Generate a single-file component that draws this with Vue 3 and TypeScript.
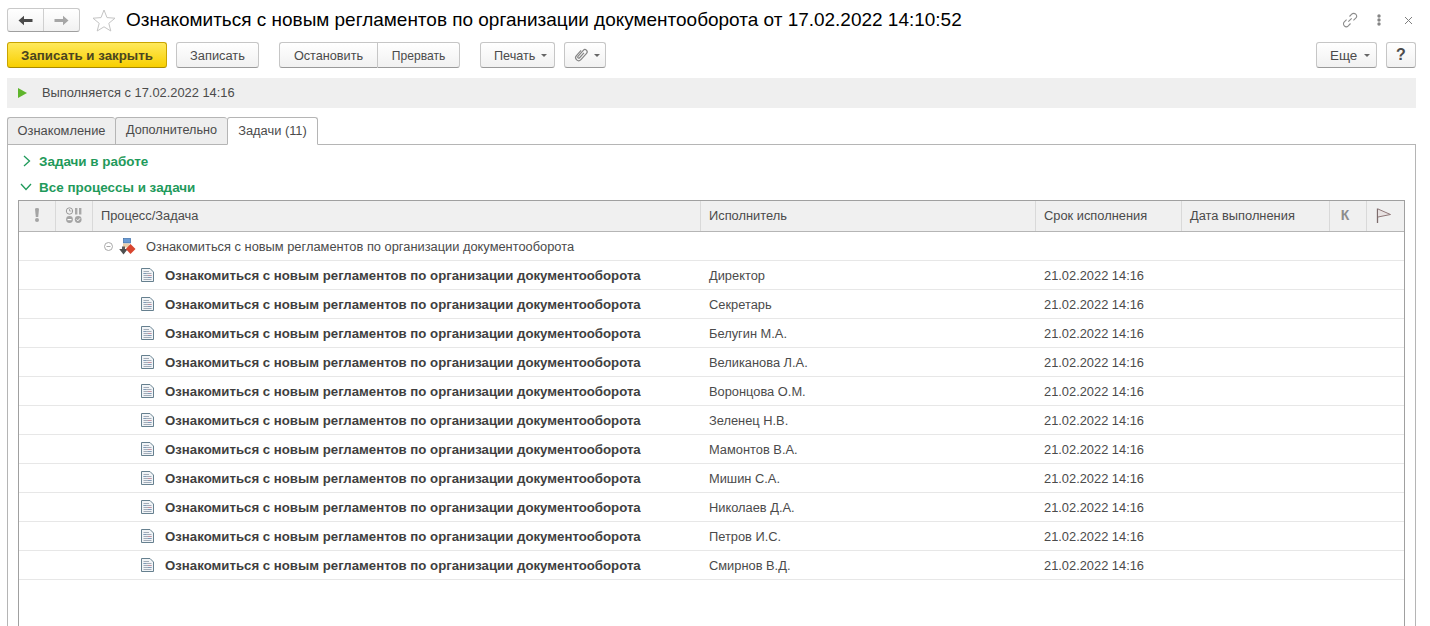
<script setup lang="ts">
interface Row { who: string }
const rows: Row[] = [
  'Директор', 'Секретарь', 'Белугин М.А.', 'Великанова Л.А.', 'Воронцова О.М.', 'Зеленец Н.В.',
  'Мамонтов В.А.', 'Мишин С.А.', 'Николаев Д.А.', 'Петров И.С.', 'Смирнов В.Д.',
].map((who) => ({ who }))
const taskName = 'Ознакомиться с новым регламентов по организации документооборота'
</script>

<template>
  <div class="page">
    <header class="titlebar">
      <div class="nav">
        <button class="nav-btn">
          <svg width="15" height="11" viewBox="0 0 15 11"><path d="M0.5 5.5 6 0.8V4H14.5V7H6V10.2Z" fill="#4a4a4a" /></svg>
        </button>
        <button class="nav-btn">
          <svg width="15" height="11" viewBox="0 0 15 11"><path d="M14.5 5.5 9 0.8V4H0.5V7H9V10.2Z" fill="#a6a6a6" /></svg>
        </button>
      </div>
      <svg class="star" width="24" height="23" viewBox="0 0 24 23"><path d="M12 1 15 8.6 23 9.2 16.8 14.3 18.8 22 12 17.8 5.2 22 7.2 14.3 1 9.2 9 8.6Z" fill="#fff" stroke="#c4c4c4" /></svg>
      <h1 class="title">Ознакомиться с новым регламентов по организации документооборота от 17.02.2022 14:10:52</h1>
      <div class="win-icons">
        <svg width="16" height="16" viewBox="0 0 16 16" fill="none" stroke="#8c8c8c" stroke-width="1.1"><path d="M6.3 9.7 9.7 6.3M7.5 4.5 9.7 2.2a2.5 2.5 0 0 1 4 4L11.4 8.4M8.5 11.5 6.3 13.8a2.5 2.5 0 0 1-4-4L4.6 7.6" /></svg>
        <svg class="dots" width="4" height="12" viewBox="0 0 4 12" fill="#858585"><circle cx="2" cy="2" r="1.7" /><circle cx="2" cy="6" r="1.7" /><circle cx="2" cy="10" r="1.7" /></svg>
        <svg class="close" width="9" height="9" viewBox="0 0 9 9" stroke="#7f7f7f" stroke-width="1"><path d="M1 1 8 8M8 1 1 8" /></svg>
      </div>
    </header>

    <div class="toolbar">
      <button class="btn primary">Записать и закрыть</button>
      <button class="btn w-save">Записать</button>
      <div class="btn-group">
        <button class="btn w-stop">Остановить</button>
        <button class="btn w-abort">Прервать</button>
      </div>
      <button class="btn w-print">Печать<span class="caret" /></button>
      <button class="btn w-clip">
        <svg width="16" height="16" viewBox="0 0 16 16" fill="none" stroke="#858585" stroke-width="1.2"><g transform="rotate(42 8 8)"><path d="M5 4.5V11.5a3 3 0 0 0 6 0V3a2.2 2.2 0 0 0-4.4 0V11a1.1 1.1 0 0 0 2.2 0V4.5" /></g></svg>
        <span class="caret" />
      </button>
      <div class="spacer" />
      <button class="btn w-more">Еще<span class="caret" /></button>
      <button class="btn w-help">?</button>
    </div>

    <div class="status">
      <svg width="9" height="10" viewBox="0 0 9 10"><path d="M0 0 9 5 0 10Z" fill="#5fb52c" /></svg>
      <span>Выполняется с 17.02.2022 14:16</span>
    </div>

    <nav class="tabs">
      <div class="tab t1">Ознакомление</div>
      <div class="tab t2">Дополнительно</div>
      <div class="tab t3 active">Задачи (11)</div>
    </nav>

    <section class="panel">
      <div class="group g1">
        <svg width="10" height="12" viewBox="0 0 10 12" fill="none" stroke="#1f9a5b" stroke-width="1.3"><path d="M2 1 7.5 6 2 11" /></svg>
        <span>Задачи в работе</span>
      </div>
      <div class="group g2">
        <svg width="12" height="10" viewBox="0 0 12 10" fill="none" stroke="#1f9a5b" stroke-width="1.3"><path d="M1 2 6 7.5 11 2" /></svg>
        <span>Все процессы и задачи</span>
      </div>

      <div class="table">
        <div class="head">
          <div class="hc center">
            <svg width="6" height="14" viewBox="0 0 6 14" fill="#a4a4a4"><path d="M1 1a2 1 0 0 1 4 0L4.2 9H1.8Z" /><circle cx="3" cy="12" r="2" /></svg>
          </div>
          <div class="hc center">
            <svg width="18" height="17" viewBox="0 0 18 17">
              <circle cx="4.5" cy="4" r="3.2" fill="none" stroke="#9a9a9a" />
              <path d="M4.5 2V4H6.5" fill="none" stroke="#9a9a9a" stroke-width=".8" />
              <rect x="10" y="1" width="2.4" height="6.5" fill="#a8a8a8" />
              <rect x="14" y="1" width="2.4" height="6.5" fill="#a8a8a8" />
              <circle cx="4.5" cy="12.5" r="3.4" fill="#a4a4a4" />
              <rect x="2.5" y="12" width="4" height="1.2" fill="#fff" />
              <circle cx="13.2" cy="12.5" r="3.4" fill="#a4a4a4" />
              <path d="M11.6 12.5 12.9 13.8 15 11.3" fill="none" stroke="#fff" />
            </svg>
          </div>
          <div class="hc">Процесс/Задача</div>
          <div class="hc">Исполнитель</div>
          <div class="hc">Срок исполнения</div>
          <div class="hc">Дата выполнения</div>
          <div class="hc center k">К</div>
          <div class="hc center last">
            <svg class="flag" width="16" height="15" viewBox="0 0 16 15" fill="none"><path d="M1.5 0.5V15" stroke="#7d6c6c" stroke-width="1.3" /><path d="M2 1 14.5 6.5 2 9" stroke="#8f7878" fill="#e8e2e2" /></svg>
          </div>
        </div>

        <div class="row process">
          <div class="cell name-cell">
            <svg class="minus" width="9" height="9" viewBox="0 0 9 9" fill="none" stroke="#a8a8a8"><circle cx="4.5" cy="4.5" r="4" /><path d="M2.5 4.5H6.5" /></svg>
            <svg class="proc-icon" width="17" height="17" viewBox="0 0 17 17">
              <rect x="4.5" y="0.5" width="7" height="4.5" fill="#6a9bd4" stroke="#3d6ea8" stroke-width=".7" />
              <path d="M4 5.5H10.5V9.5H4Z" fill="#ecd0ac" />
              <path d="M3 8.5H6V12.5H3Z" fill="#5a5a5a" />
              <path d="M0.2 11 4.5 16.5 8.8 11Z" fill="#4f4f4f" />
              <path d="M11.5 6 16.5 11 11.5 16 6.8 11Z" fill="#d8452f" />
            </svg>
            <span>{{ taskName }}</span>
          </div>
        </div>
        <div v-for="r in rows" :key="r.who" class="row">
          <div class="cell task-cell">
            <svg class="doc" width="13" height="14" viewBox="0 0 13 14">
              <path d="M0.5 0.5H9L12.5 4V13.5H0.5Z" fill="#f1f4f7" stroke="#66808f" />
              <path d="M2.5 3.5H8M2.5 5.5H10.5M2.5 7.5H10.5M2.5 9.5H10.5M2.5 11.5H10.5" stroke="#a3acb8" />
              <path d="M2.5 5.5H5M7 9.5H10.5" stroke="#7f9bb8" />
              <path d="M7 7.5H10.5" stroke="#c491a0" />
            </svg>
            <b>{{ taskName }}</b>
          </div>
          <div class="cell who">{{ r.who }}</div>
          <div class="cell due">21.02.2022 14:16</div>
        </div>
      </div>
    </section>
  </div>
</template>

<style>
body { margin: 0; background: #fff; }
</style>

<style scoped>
.page {
  width: 1430px;
  height: 626px;
  overflow: hidden;
  display: flex;
  flex-direction: column;
  padding: 8px 14px 0 7px;
  box-sizing: border-box;
  font: 12.85px "Liberation Sans", Arial, sans-serif;
  color: #4b4b4b;
  background: #fff;
}
button { font: inherit; color: inherit; cursor: default; }

.titlebar { display: flex; align-items: center; height: 24px; margin-bottom: 10px; }
.nav {
  display: flex;
  width: 73px;
  height: 24px;
  box-sizing: border-box;
  border: 1px solid #c9c9c9;
  border-bottom: 1px solid #9f9f9f;
  border-radius: 3px;
  background: linear-gradient(#fff, #f1f1f1);
}
.nav-btn { flex: 1; padding: 0; border: 0; background: none; display: flex; align-items: center; justify-content: center; }
.nav-btn + .nav-btn { border-left: 1px solid #cfcfcf; }
.star { margin: 0 0 0 12px; flex: none; }
.title { margin: 0 0 0 10px; font-size: 18.98px; font-weight: 400; color: #000; white-space: nowrap; line-height: 24px; }
.win-icons { margin-left: auto; margin-right: 3px; display: flex; align-items: center; }
.dots { margin-left: 19px; }
.close { margin-left: 23px; }

.toolbar { display: flex; align-items: flex-start; height: 26px; margin-bottom: 10px; }
.btn {
  height: 26px;
  padding: 0;
  box-sizing: border-box;
  border: 1px solid #c6c6c6;
  border-bottom: 1px solid #9a9a9a;
  border-radius: 3px;
  background: linear-gradient(#fff, #f1f1f1);
  color: #4b4b4b;
  display: flex;
  align-items: center;
  justify-content: center;
  flex: none;
}
.primary {
  width: 160px;
  border-color: #c9a400;
  border-bottom-color: #a88a00;
  background: linear-gradient(#ffe95c, #f8cf00);
  font-size: 13.3px;
  font-weight: 700;
  color: #4a4520;
}
.w-save { width: 83px; margin-left: 9px; }
.btn-group { display: flex; margin-left: 20px; }
.w-stop { width: 98px; border-right: 0; border-radius: 3px 0 0 3px; font-size: 12.7px; padding-top: 2px; }
.w-abort { width: 83px; border-radius: 0 3px 3px 0; font-size: 12.1px; padding-top: 2px; }
.w-print { width: 75px; margin-left: 20px; padding: 2px 0 0 13px; justify-content: flex-start; font-size: 12.6px; }
.w-print .caret { margin-left: 6px; margin-top: -1px; }
.w-clip { width: 42px; margin-left: 9px; padding-left: 8px; justify-content: flex-start; }
.w-clip .caret { margin-left: 5px; }
.spacer { flex: 1; }
.w-more { width: 61px; font-size: 13.4px; padding-left: 13px; justify-content: flex-start; }
.w-more .caret { margin-left: 7px; }
.w-help { width: 30px; margin-left: 9px; font-size: 16px; font-weight: 700; }
.caret {
  width: 0;
  height: 0;
  margin-left: 6px;
  border-left: 3px solid transparent;
  border-right: 3px solid transparent;
  border-top: 3px solid #666;
}

.status {
  height: 30px;
  box-sizing: border-box;
  background: #efefef;
  display: flex;
  align-items: center;
  padding: 0 0 2px 11px;
  margin-bottom: 9px;
  flex: none;
}
.status svg { margin-top: 2px; }
.status span { margin-left: 15px; }

.tabs { display: flex; height: 28px; flex: none; position: relative; z-index: 1; margin-bottom: -1px; }
.tab {
  box-sizing: border-box;
  height: 28px;
  padding-bottom: 2px;
  border: 1px solid #b5b5b5;
  border-right: 0;
  border-radius: 3px 3px 0 0;
  background: #eeeeee;
  display: flex;
  align-items: center;
  justify-content: center;
}
.t1 { width: 108px; }
.t2 { width: 112px; font-size: 12.65px; }
.t3 { width: 91px; }
.active { background: #fff; border-right: 1px solid #b5b5b5; border-bottom-color: #fff; }

.panel {
  flex: 1;
  min-height: 0;
  box-sizing: border-box;
  border: 1px solid #b5b5b5;
  border-bottom: 0;
  padding: 0 10px;
  overflow: hidden;
}
.group { display: flex; align-items: center; height: 16px; font-size: 13.45px; font-weight: 700; color: #1f9a5b; position: relative; }
.g1 { margin-top: 8px; padding-left: 4px; }
.g1 span { margin-left: 7px; }
.g2 { margin-top: 10px; margin-bottom: 5px; padding-left: 2px; }
.g2 span { margin-left: 7px; }

.table {
  border: 1px solid #a0a0a0;
  border-bottom: 0;
  height: 500px;
  box-sizing: border-box;
}
.head, .row {
  display: grid;
  grid-template-columns: 37px 37px 608px 335px 146px 148px 37px 37px;
}
.head { height: 31px; border-bottom: 1px solid #b5b5b5; box-sizing: border-box; background: #f0f0f0; }
.hc { display: flex; align-items: center; padding: 0 0 2px 8px; border-right: 1px solid #d9d9d9; color: #4b4b4b; min-width: 0; white-space: nowrap; }
.center { justify-content: center; padding-left: 0; }
.last { border-right: 0; }
.k { font-size: 14px; font-weight: 700; color: #8c8c8c; padding-right: 6px; }
.flag { margin-right: 4px; }

.row { height: 29px; box-sizing: border-box; border-bottom: 1px solid #e7e7e7; align-items: center; }
.cell { white-space: nowrap; }
.name-cell, .task-cell { grid-column: 3; display: flex; align-items: center; }
.process { display: flex; height: 29px; }
.name-cell { padding-left: 85px; }
.minus { flex: none; }
.proc-icon { margin-left: 6px; flex: none; }
.name-cell span { margin-left: 10px; }
.task-cell { padding-left: 48px; }
.doc { flex: none; }
.task-cell b { margin-left: 11px; font-size: 13.22px; color: #3f3f3f; }
.who { grid-column: 4; padding-left: 8px; }
.due { grid-column: 5; padding-left: 8px; }
</style>
